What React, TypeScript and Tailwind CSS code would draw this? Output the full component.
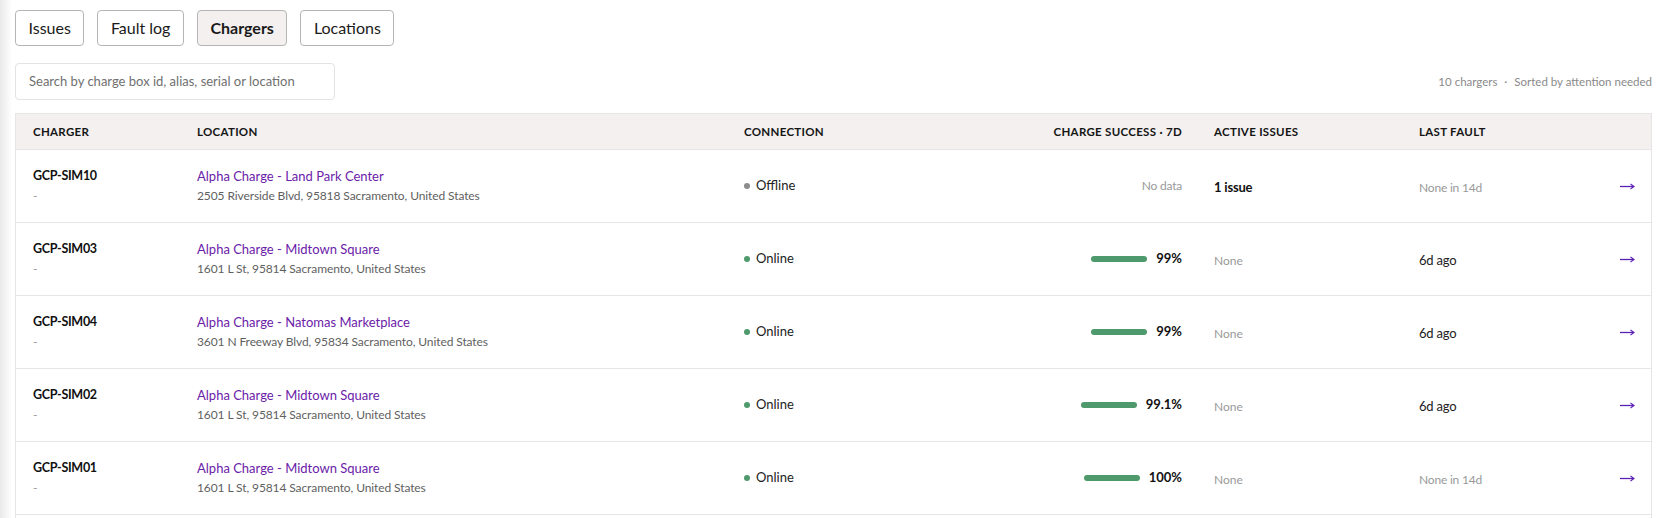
import React from "react";

type Charger = {
  id: string;
  location: string;
  address: string;
  online: boolean;
  success: string | null;
  issues: number;
  lastFault: string | null;
};

const chargers: Charger[] = [
  {
    id: "GCP-SIM10",
    location: "Alpha Charge - Land Park Center",
    address: "2505 Riverside Blvd, 95818 Sacramento, United States",
    online: false,
    success: null,
    issues: 1,
    lastFault: null,
  },
  {
    id: "GCP-SIM03",
    location: "Alpha Charge - Midtown Square",
    address: "1601 L St, 95814 Sacramento, United States",
    online: true,
    success: "99%",
    issues: 0,
    lastFault: "6d ago",
  },
  {
    id: "GCP-SIM04",
    location: "Alpha Charge - Natomas Marketplace",
    address: "3601 N Freeway Blvd, 95834 Sacramento, United States",
    online: true,
    success: "99%",
    issues: 0,
    lastFault: "6d ago",
  },
  {
    id: "GCP-SIM02",
    location: "Alpha Charge - Midtown Square",
    address: "1601 L St, 95814 Sacramento, United States",
    online: true,
    success: "99.1%",
    issues: 0,
    lastFault: "6d ago",
  },
  {
    id: "GCP-SIM01",
    location: "Alpha Charge - Midtown Square",
    address: "1601 L St, 95814 Sacramento, United States",
    online: true,
    success: "100%",
    issues: 0,
    lastFault: null,
  },
  {
    id: "GCP-SIM05",
    location: "Alpha Charge - Midtown Square",
    address: "1601 L St, 95814 Sacramento, United States",
    online: true,
    success: "100%",
    issues: 0,
    lastFault: null,
  },
];

const tabs = ["Issues", "Fault log", "Chargers", "Locations"];

// charger | location | connection | success | issues | last fault | arrow
const cols = "grid grid-cols-[165px_547px_270px_200px_205px_200px_1fr]";

const ChargerRow = ({ c }: { c: Charger }) => (
  <div className={`${cols} h-[73px] items-center border-t border-[#e6e6e6]`}>
    <div className="pl-[17px]">
      <div className="text-[12.5px] font-bold leading-[20px] tracking-[-0.3px] text-[#111]">
        {c.id}
      </div>
      <div className="text-[12px] leading-[20px] text-[#999]">-</div>
    </div>
    <div className="pl-4">
      <div className="text-[13px] leading-[20px] text-[#6b21a8]">{c.location}</div>
      <div className="text-[12px] leading-[20px] tracking-[-0.1px] text-[#5f5f5f]">
        {c.address}
      </div>
    </div>
    <div className="flex items-center gap-[6px] pl-4 text-[13px] text-[#222]">
      <span
        className={`h-[6px] w-[6px] rounded-full ${
          c.online ? "bg-[#4e9a6c]" : "bg-[#8c8c8c]"
        }`}
      />
      {c.online ? "Online" : "Offline"}
    </div>
    <div className="flex items-center justify-end gap-[9px] pr-4">
      {c.success ? (
        <>
          <span className="h-[6px] w-[56px] rounded-full bg-[#4e9a6c]" />
          <span className="text-[13px] font-bold text-[#111]">{c.success}</span>
        </>
      ) : (
        <span className="text-[12px] tracking-[-0.2px] text-[#999]">No data</span>
      )}
    </div>
    <div className="pl-4">
      {c.issues > 0 ? (
        <span className="text-[13px] font-bold tracking-[-0.2px] text-[#111]">
          {c.issues} issue
        </span>
      ) : (
        <span className="text-[12px] text-[#999]">None</span>
      )}
    </div>
    <div className="pl-4">
      {c.lastFault ? (
        <span className="text-[13px] tracking-[-0.2px] text-[#222]">{c.lastFault}</span>
      ) : (
        <span className="text-[12px] tracking-[-0.2px] text-[#999]">None in 14d</span>
      )}
    </div>
    <div className="flex justify-end pr-4">
      <svg width="15" height="7" viewBox="0 0 15 7" fill="none">
        <path d="M0 3.5h13.5" stroke="#5b21b6" strokeWidth="1.3" />
        <path d="M10.5 1l3.5 2.5-3.5 2.5" stroke="#5b21b6" strokeWidth="1.1" />
      </svg>
    </div>
  </div>
);

export default function App() {
  return (
    <div
      className="flex h-screen overflow-hidden bg-white"
      style={{ fontFamily: "Lato, 'Noto Sans', sans-serif" }}
    >
      <div className="w-[12px] shrink-0 bg-gradient-to-r from-[#e9e9e9] to-white" />
      <div className="flex-1 pl-[3px] pr-[8px] pt-[10px]">
        <div className="flex gap-[13px]">
          {tabs.map((t) => (
            <button
              key={t}
              className={`h-[36px] rounded-[4px] border border-[#b5b5b5] px-[12.5px] text-[16px] text-[#1a1a1a] ${
                t === "Chargers" ? "bg-[#f3f0ef] font-bold" : "bg-white"
              }`}
            >
              {t}
            </button>
          ))}
        </div>

        <div className="mt-[17px] flex items-center justify-between">
          <div className="flex h-[37px] w-[320px] items-center rounded-[4px] border border-[#e3e3e3] px-[13px] text-[13px] text-[#707070]">
            Search by charge box id, alias, serial or location
          </div>
          <div className="text-[11.5px] text-[#8a8a8a]">
            10 chargers <span className="mx-[4px]">·</span> Sorted by attention needed
          </div>
        </div>

        <div className="mt-[13px] border border-[#e6e6e6]">
          <div
            className={`${cols} h-[35px] items-center bg-[#f3f0ef] text-[11.5px] font-bold uppercase tracking-[0.3px] text-[#151515]`}
          >
            <div className="pl-[17px]">Charger</div>
            <div className="pl-4">Location</div>
            <div className="pl-4">Connection</div>
            <div className="pr-4 text-right">Charge success · 7d</div>
            <div className="pl-4">Active issues</div>
            <div className="pl-4">Last fault</div>
            <div />
          </div>
          {chargers.map((c) => (
            <ChargerRow key={c.id} c={c} />
          ))}
        </div>
      </div>
    </div>
  );
}
